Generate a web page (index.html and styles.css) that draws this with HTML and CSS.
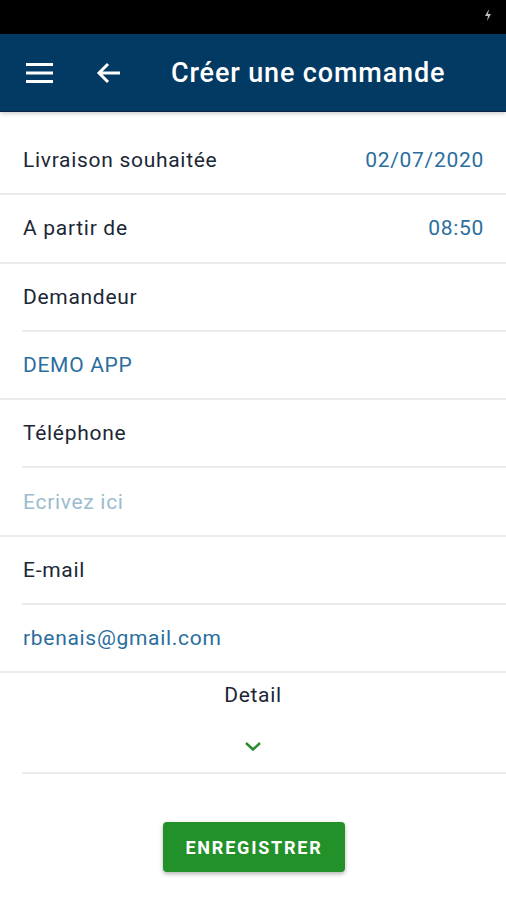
FILE: index.html
```html
<!DOCTYPE html>
<html>
<head>
  <title>Créer une commande</title>
  <link rel="stylesheet" href="styles.css">
</head>
<body>
  <div class="status-bar">
    <svg class="status-icon" width="8" height="12" viewBox="0 0 8 12">
      <path d="M5 0 L1 7 H4 L3 12 L7 5 H4 Z" fill="#bbb"/>
    </svg>
  </div>

  <header class="app-bar">
    <svg class="menu-icon" width="28" height="22" viewBox="0 0 28 22">
      <rect x="0" y="1" width="27" height="3" fill="#fff"/>
      <rect x="0" y="9.5" width="27" height="3" fill="#fff"/>
      <rect x="0" y="18" width="27" height="3" fill="#fff"/>
    </svg>
    <svg class="back-icon" width="26" height="24" viewBox="0 0 26 24">
      <path d="M24 12 H3 M12 3 L3 12 L12 21" stroke="#fff" stroke-width="3" fill="none"/>
    </svg>
    <h1 class="title">Créer une commande</h1>
  </header>

  <main class="form">
    <div class="row">
      <span class="label">Livraison souhaitée</span>
      <span class="value">02/07/2020</span>
    </div>
    <div class="row">
      <span class="label">A partir de</span>
      <span class="value">08:50</span>
    </div>

    <div class="row row-inset">
      <span class="label">Demandeur</span>
    </div>
    <div class="row">
      <span class="value">DEMO APP</span>
    </div>

    <div class="row row-inset">
      <span class="label">Téléphone</span>
    </div>
    <div class="row">
      <span class="placeholder">Ecrivez ici</span>
    </div>

    <div class="row row-inset">
      <span class="label">E-mail</span>
    </div>
    <div class="row">
      <span class="value">rbenais@gmail.com</span>
    </div>

    <div class="detail">
      <span class="detail-label">Detail</span>
      <svg class="chevron" width="18" height="12" viewBox="0 0 18 12">
        <path d="M2 3 L9 9.5 L16 3" stroke="#2a8a2f" stroke-width="2.4" fill="none"/>
      </svg>
    </div>

    <div class="actions">
      <button class="save-button">ENREGISTRER</button>
    </div>
  </main>
</body>
</html>
```

FILE: styles.css
```css
body {
  margin: 0;
  font-family: Roboto, "Noto Sans", sans-serif;
  background-color: #fff;
  width: 506px;
  height: 900px;
  overflow: hidden;
}

.status-bar {
  height: 34px;
  background-color: #000;
  display: flex;
  justify-content: flex-end;
  align-items: center;
  padding-right: 14px;
}

.status-icon {
  margin-top: -4px;
}

.app-bar {
  height: 77px;
  background-color: #033a63;
  border-bottom: 1px solid #0d1f45;
  box-shadow: 0 2px 4px rgba(0, 0, 0, 0.18);
  display: flex;
  align-items: center;
  padding-left: 26px;
  position: relative;
  z-index: 1;
}

.menu-icon {
  margin-right: 42px;
}

.back-icon {
  margin-right: 49px;
}

.title {
  margin: 0;
  color: #fff;
  font-size: 27px;
  font-weight: 500;
  letter-spacing: 0.85px;
}

.form {
  display: flex;
  flex-direction: column;
  padding-top: 15px;
}

.row {
  height: 66.3px;
  border-bottom: 2px solid #ebebeb;
  display: flex;
  align-items: center;
  justify-content: space-between;
  padding: 0 22px 0 23px;
  font-size: 21px;
  letter-spacing: 0.7px;
}

/* label rows get a divider that starts at the text edge */
.row-inset {
  border-bottom-color: transparent;
  position: relative;
}

.row-inset::after {
  content: '';
  position: absolute;
  left: 22px;
  right: 0;
  bottom: -2px;
  height: 2px;
  background-color: #ebebeb;
}

.label {
  color: #1b2736;
}

.value {
  color: #2b6e9e;
}

.placeholder {
  color: #9bbccd;
}

.detail {
  height: 101px;
  box-sizing: border-box;
  margin-left: 22px;
  border-bottom: 2px solid #ebebeb;
  display: flex;
  flex-direction: column;
  align-items: center;
  padding-top: 10px;
}

.detail-label {
  font-size: 21px;
  letter-spacing: 0.7px;
  color: #1b2736;
  margin-left: -22px;
}

.chevron {
  margin-top: 33px;
  margin-left: -22px;
}

.actions {
  display: flex;
  justify-content: center;
  padding-top: 48px;
}

.save-button {
  width: 182px;
  height: 50px;
  background-color: #23912a;
  color: #fff;
  border: none;
  border-radius: 4px;
  font-family: Roboto, sans-serif;
  font-size: 18px;
  font-weight: 700;
  letter-spacing: 1.8px;
  box-shadow: 0 2px 4px rgba(0, 0, 0, 0.3);
  margin-left: 2px;
}
```
